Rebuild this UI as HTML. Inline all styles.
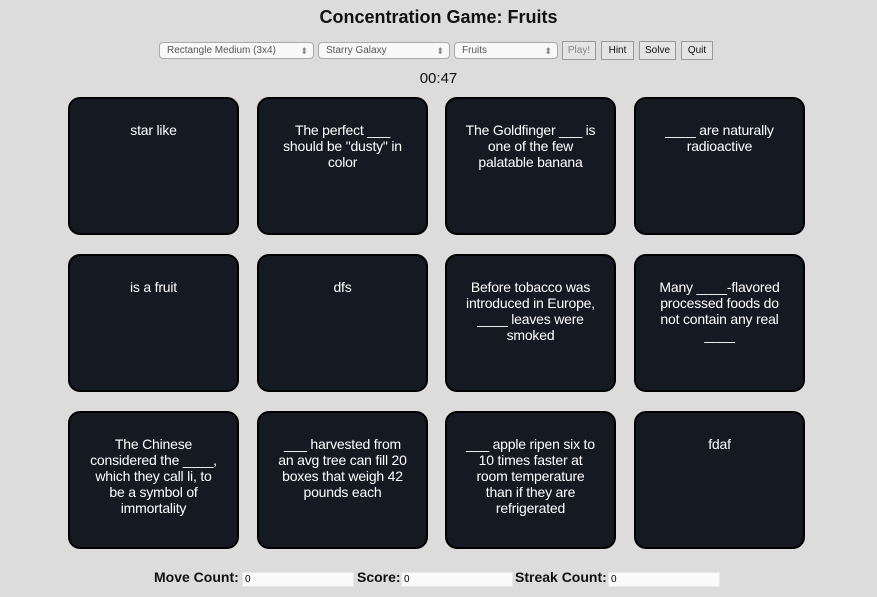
<!DOCTYPE html>
<html><head><style>
body{margin:0;width:877px;height:597px;background:#dcdcdc;font-family:"Liberation Sans",sans-serif;position:relative;overflow:hidden}
h1{position:absolute;top:7px;left:0;width:877px;text-align:center;margin:0;font-size:18px;font-weight:bold;color:#111}
.sel{position:absolute;top:42px;height:15px;border:1px solid #aaa;border-radius:4px;background:#f8f8f8;font-size:10px;color:#555;line-height:16px;padding-left:7px;box-sizing:content-box}
.sel:after{content:"⬍";position:absolute;right:5px;top:0;font-size:9px;color:#888}
.btn{position:absolute;top:41px;height:19px;border:1px solid #999;background:#e4e4e4;font-size:10px;line-height:18px;text-align:center;color:#111;box-sizing:border-box}
#t{position:absolute;top:70px;left:0;width:877px;text-align:center;font-size:15px;color:#111}
.c{position:absolute;width:171px;height:138px;background:#141922;border:2px solid #000;border-radius:12px;box-sizing:border-box;color:#fff;font-size:14px;line-height:16px;text-align:center;padding:23px 16px 0;letter-spacing:-0.2px}
.f{position:absolute;top:569px;font-size:14px;font-weight:bold;color:#111}
.i{position:absolute;top:572px;height:13px;background:#fafafa;border:1px solid #e8e8e8;font-size:10px;line-height:13px;padding-left:2px;width:108px}
</style></head><body>
<h1>Concentration Game: Fruits</h1>
<div class="sel" style="left:159px;width:146px">Rectangle Medium (3x4)</div>
<div class="sel" style="left:318px;width:123px">Starry Galaxy</div>
<div class="sel" style="left:454px;width:95px">Fruits</div>
<div class="btn" style="left:562px;width:34px;color:#888">Play!</div>
<div class="btn" style="left:601px;width:33px">Hint</div>
<div class="btn" style="left:639px;width:37px">Solve</div>
<div class="btn" style="left:681px;width:32px">Quit</div>
<div id="t">00:47</div>
<div class="c" style="left:68px;top:97px">star like</div>
<div class="c" style="left:257px;top:97px">The perfect ___ should be "dusty" in color</div>
<div class="c" style="left:445px;top:97px">The Goldfinger ___ is one of the few palatable banana</div>
<div class="c" style="left:634px;top:97px">____ are naturally radioactive</div>
<div class="c" style="left:68px;top:254px">is a fruit</div>
<div class="c" style="left:257px;top:254px">dfs</div>
<div class="c" style="left:445px;top:254px">Before tobacco was introduced in Europe, ____ leaves were smoked</div>
<div class="c" style="left:634px;top:254px">Many ____-flavored processed foods do not contain any real ____</div>
<div class="c" style="left:68px;top:411px">The Chinese considered the ____, which they call li, to be a symbol of immortality</div>
<div class="c" style="left:257px;top:411px">___ harvested from an avg tree can fill 20 boxes that weigh 42 pounds each</div>
<div class="c" style="left:445px;top:411px">___ apple ripen six to 10 times faster at room temperature than if they are refrigerated</div>
<div class="c" style="left:634px;top:411px">fdaf</div>
<div class="f" style="left:154px">Move Count:</div><div class="i" style="left:242px">0</div>
<div class="f" style="left:357px">Score:</div><div class="i" style="left:401px">0</div>
<div class="f" style="left:515px">Streak Count:</div><div class="i" style="left:608px">0</div>
</body></html>
